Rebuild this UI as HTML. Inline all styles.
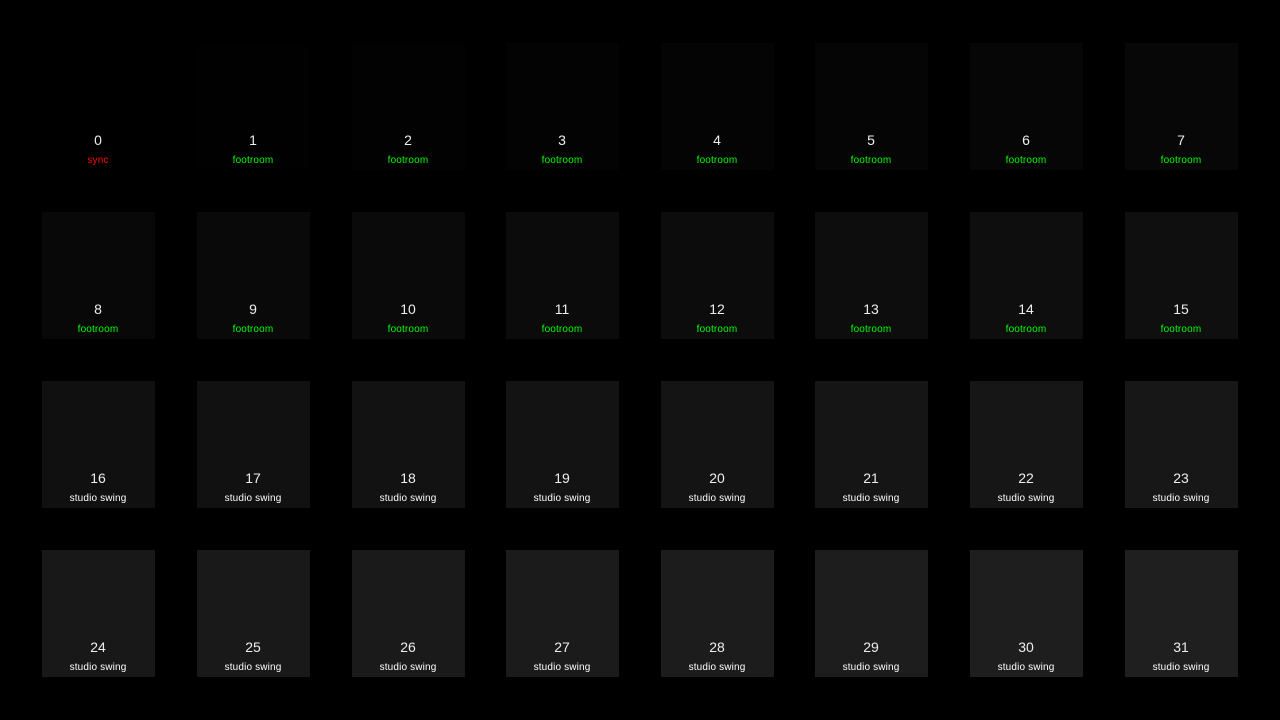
<!DOCTYPE html>
<html><head><style>
html,body{margin:0;padding:0;background:#000;width:1280px;height:720px;overflow:hidden;font-family:"Liberation Sans","DejaVu Sans",sans-serif}
.c{position:absolute;width:113px;height:127px}
.n{position:absolute;left:-1px;right:0;top:89px;text-align:center;color:#eee;font-size:14px;line-height:16px}
.l{position:absolute;left:-1px;right:0;top:112px;text-align:center;font-size:10px;line-height:12px;letter-spacing:0.15px}
</style></head><body>
<div id="g"></div>
<script>
var xs=[42,197,352,506,661,815,970,1125],ys=[43,212,381,550],h='';
for(var i=0;i<32;i++){var x=xs[i%8],y=ys[Math.floor(i/8)];
var lab=i==0?'sync':(i<16?'footroom':'studio swing');
var col=i==0?'#f00':(i<16?'#0f0':'#fff');
h+='<div class="c" style="left:'+x+'px;top:'+y+'px;background:rgb('+i+','+i+','+i+')"><div class="n">'+i+'</div><div class="l" style="color:'+col+'">'+lab+'</div></div>';}
document.getElementById('g').innerHTML=h;
</script>
</body></html>
